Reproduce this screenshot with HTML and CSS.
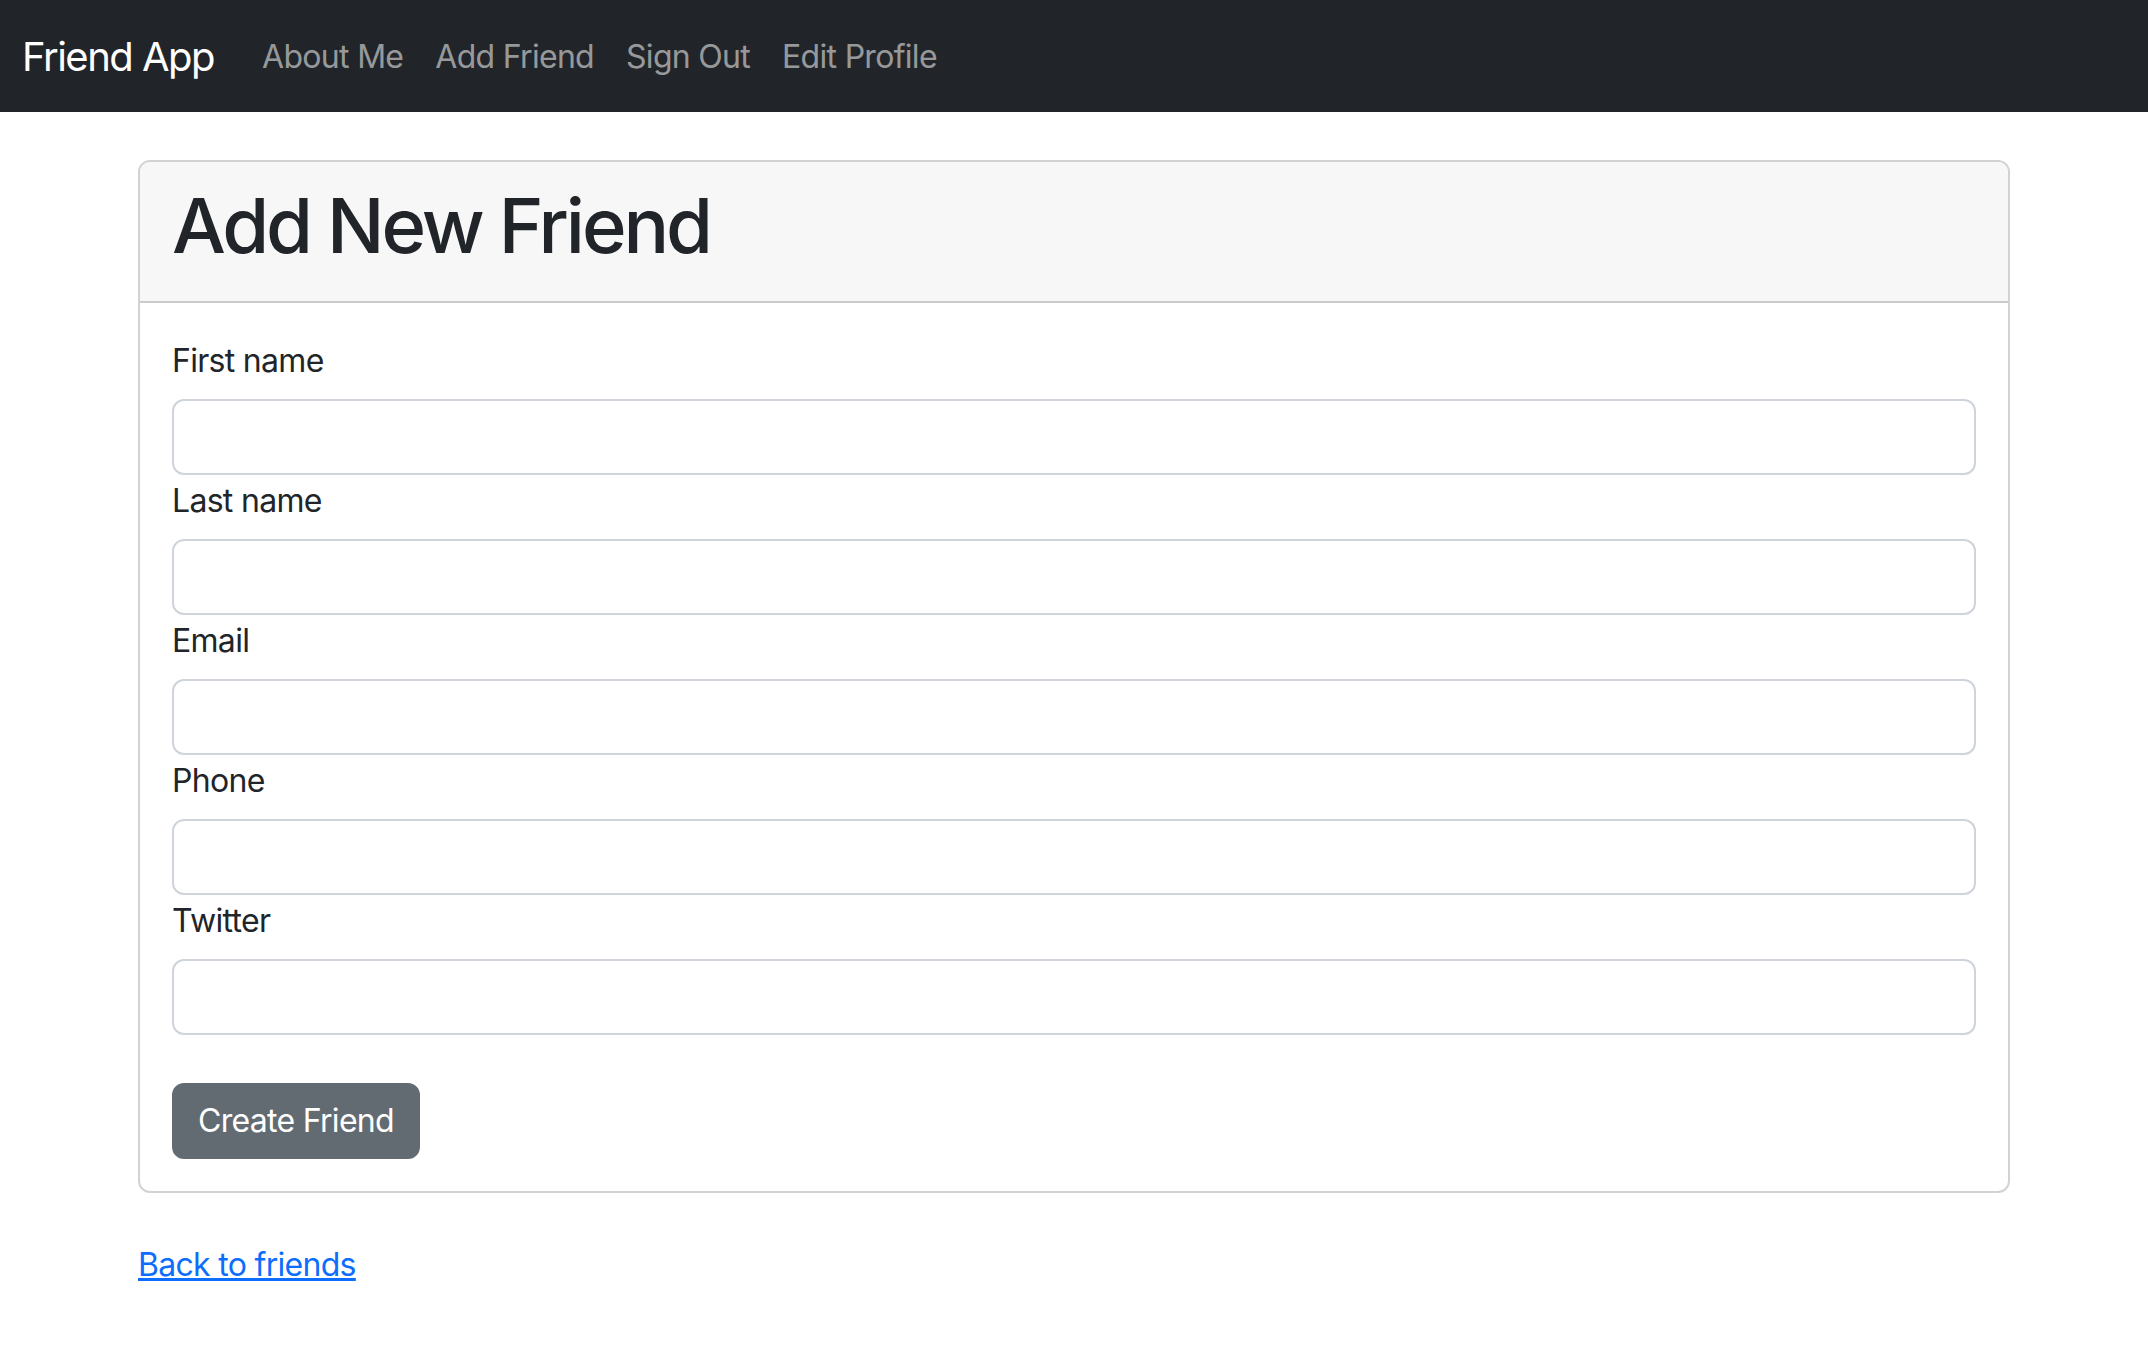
FILE: index.html
```html
<!DOCTYPE html>
<html lang="en">
<head>
<meta charset="utf-8">
<title>Friend App</title>
<link rel="stylesheet" href="styles.css">
</head>
<body>
<nav class="navbar">
  <a class="brand" href="#">Friend App</a>
  <div class="nav-links">
    <a href="#">About Me</a>
    <a href="#">Add Friend</a>
    <a href="#">Sign Out</a>
    <a href="#">Edit Profile</a>
  </div>
</nav>
<main class="container">
  <section class="card">
    <div class="card-header">
      <h1>Add New Friend</h1>
    </div>
    <form class="card-body">
      <div class="field">
        <label for="first">First name</label>
        <input id="first" type="text">
      </div>
      <div class="field">
        <label for="last">Last name</label>
        <input id="last" type="text">
      </div>
      <div class="field">
        <label for="email">Email</label>
        <input id="email" type="text">
      </div>
      <div class="field">
        <label for="phone">Phone</label>
        <input id="phone" type="text">
      </div>
      <div class="field">
        <label for="twitter">Twitter</label>
        <input id="twitter" type="text">
      </div>
      <button type="button" class="btn">Create Friend</button>
    </form>
  </section>
  <p class="back"><a href="#">Back to friends</a></p>
</main>
</body>
</html>
```
FILE: styles.css
```css
* { box-sizing: border-box; }
body {
  margin: 0;
  font-family: Inter, "Noto Sans", "Liberation Sans", sans-serif;
  color: #212529;
  background: #fff;
  letter-spacing: -0.7px;
}
.navbar {
  height: 112px;
  background: #212529;
  padding: 0 24px 0 22px;
  display: flex;
  align-items: center;
}
.brand {
  color: #fff;
  font-size: 40px;
  line-height: 60px;
  text-decoration: none;
  margin-right: 32px;
  letter-spacing: -1.5px;
  padding-top: 2px;
}
.nav-links { display: flex; padding-top: 2px; }
.nav-links a {
  color: rgba(255, 255, 255, 0.55);
  font-size: 32px;
  line-height: 48px;
  padding: 16px;
  text-decoration: none;
}
.container {
  width: 1872px;
  margin: 0 auto;
  padding-top: 48px;
}
.card {
  border: 2px solid rgba(0, 0, 0, 0.175);
  border-radius: 12px;
  overflow: hidden;
}
.card-header {
  background: #f7f7f7;
  padding: 16px 32px;
  border-bottom: 2px solid rgba(0, 0, 0, 0.175);
}
.card-header h1 {
  margin: 0 0 14px;
  font-size: 76px;
  line-height: 91.4px;
  font-weight: 500;
  letter-spacing: -3.1px;
  padding-top: 2px;
}
.card-body { padding: 32px; }
.field label {
  display: block;
  font-size: 32px;
  line-height: 48px;
  margin-bottom: 16px;
  padding-top: 2px;
  height: 48px;
}
.field input {
  display: block;
  width: 100%;
  height: 76px;
  border: 2px solid #ced4da;
  border-radius: 12px;
  font-size: 32px;
  padding: 12px 24px;
}
.btn {
  margin-top: 48px;
  display: inline-block;
  font-family: inherit;
  font-size: 32px;
  line-height: 48px;
  letter-spacing: -0.7px;
  padding: 12px 24px;
  border: 2px solid #636b72;
  border-radius: 12px;
  background: #636b72;
  color: #fff;
}
.back {
  margin: 48px 0 0;
  font-size: 32px;
  line-height: 48px;
}
.back a { color: #0d6efd; }
```
